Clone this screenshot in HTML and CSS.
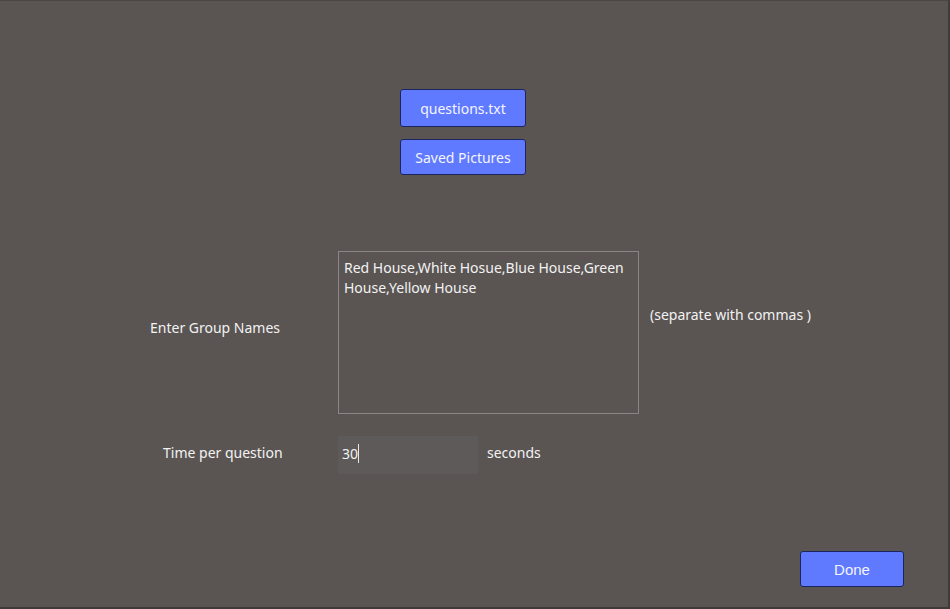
FILE: index.html
```html
<!DOCTYPE html>
<html>
<head>
<meta charset="utf-8">
<link rel="stylesheet" href="styles.css">
</head>
<body>
<div class="window">
  <div class="files">
    <button class="btn btn-file">questions.txt</button>
    <button class="btn btn-file btn-second">Saved Pictures</button>
  </div>
  <div class="row-groups">
    <div class="label label-groups">Enter Group Names</div>
    <div class="textarea">Red House,White Hosue,Blue House,Green House,Yellow House</div>
    <div class="hint">(separate with commas )</div>
  </div>
  <div class="row-time">
    <div class="label label-time">Time per question</div>
    <div class="timebox"><span class="caret">30</span></div>
    <div class="unit">seconds</div>
  </div>
  <div class="footer">
    <button class="btn btn-done">Done</button>
  </div>
</div>
</body>
</html>
```
FILE: styles.css
```css
html, body {
  margin: 0;
  padding: 0;
  background: #5a5553;
}
.window {
  width: 950px;
  height: 609px;
  box-sizing: border-box;
  background: #5a5553;
  border-top: 1px solid #4a4645;
  border-right: 2px solid #3e3b3a;
  border-bottom: 2px solid #3e3b3a;
  font-family: "Noto Sans", "Open Sans", sans-serif;
  font-size: 14px;
  color: #f2f2f2;
  overflow: hidden;
}
.btn {
  display: flex;
  align-items: center;
  justify-content: center;
  box-sizing: border-box;
  background: #5f7aff;
  border: 1px solid #1b2560;
  border-radius: 3px;
  color: #f4f4ff;
  font-family: inherit;
  font-size: 14px;
  padding: 0;
}
.files {
  display: flex;
  flex-direction: column;
  gap: 12px;
  padding-top: 88px;
  padding-left: 400px;
}
.btn-file {
  width: 126px;
  height: 38px;
}
.btn-second {
  height: 36px;
}
.row-groups {
  display: grid;
  grid-template-columns: 338px 301px auto;
  margin-top: 76px;
  height: 163px;
}
.label {
  line-height: 20px;
}
.label-groups {
  padding-left: 150px;
  margin-top: 67px;
}
.textarea {
  box-sizing: border-box;
  border: 1px solid #8a8685;
  padding: 6px 10px 0 5px;
  line-height: 20px;
  height: 163px;
}
.hint {
  margin-top: 54px;
  margin-left: 11px;
  line-height: 20px;
}
.row-time {
  display: grid;
  grid-template-columns: 338px 140px auto;
  margin-top: 22px;
  height: 38px;
}
.label-time {
  padding-left: 163px;
  margin-top: 7px;
}
.timebox {
  background: #5d5a59;
  padding: 8px 0 0 4px;
  box-sizing: border-box;
  line-height: 20px;
}
.caret {
  border-right: 1px solid #e8e8e8;
}
.unit {
  margin-left: 9px;
  margin-top: 7px;
  line-height: 20px;
}
.footer {
  padding-top: 77px;
  padding-left: 800px;
}
.btn-done {
  width: 104px;
  height: 36px;
  font-family: "Liberation Sans", Arial, sans-serif;
  font-size: 15px;
}
```
